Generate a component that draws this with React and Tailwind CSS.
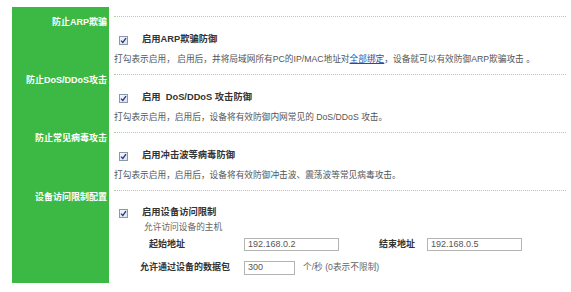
import React from 'react';

const sections = [
    {
        title: '防止ARP欺骗',
        check: '启用ARP欺骗防御',
        desc: (
            <>
                打勾表示启用， 启用后，并将局域网所有PC的IP/MAC地址对
                <span className="text-[#1d4fa6] underline">全部绑定</span>
                ，设备就可以有效防御ARP欺骗攻击 。
            </>
        ),
    },
    {
        title: '防止DoS/DDoS攻击',
        check: '启用\u00a0\u00a0DoS/DDoS 攻击防御',
        desc: '打勾表示启用，启用后，设备将有效防御内网常见的 DoS/DDoS 攻击。',
    },
    {
        title: '防止常见病毒攻击',
        check: '启用冲击波等病毒防御',
        desc: '打勾表示启用，启用后，设备将有效防御冲击波、震荡波等常见病毒攻击。',
    },
];

const CheckBox = () => (
    <span className="flex items-center justify-center w-[9px] h-[9px] border border-[#8b98a8] bg-gradient-to-br from-[#f4f6fb] to-[#dde3ee]">
        <svg width="7" height="7" viewBox="0 0 7 7">
            <path d="M1 3.6 L2.8 5.4 L6 1.2" fill="none" stroke="#24368a" strokeWidth="1.3" />
        </svg>
    </span>
);

const TextBox = ({ value, width, height }) => (
    <div
        className={`${width} ${height} border border-[#b4b4b4] bg-white flex items-center pl-[3px] text-[9px] text-[#555] font-['Liberation_Sans',sans-serif]`}
    >
        {value}
    </div>
);

const App = () => {
    return (
        <div className="w-[571px] h-[292px] bg-white font-['Liberation_Sans','Noto_Sans_CJK_SC',sans-serif] overflow-hidden">
            <div className="ml-[12px] pt-[7px] grid grid-cols-[97px_457px]">
                {/* spacer above first row */}
                <div className="h-[9px] bg-[#3cb944]" />
                <div />

                {sections.map((s) => (
                    <React.Fragment key={s.title}>
                        <div className="h-[58px] bg-[#3cb944] text-right pr-[2px] pt-[1px] text-white font-bold text-[9px] leading-[11px]">
                            {s.title}
                        </div>
                        <div className="ml-[5px] border-t border-dotted border-[#a3d594] pt-[16px]">
                            <div className="flex items-center h-[14px] pl-[5px]">
                                <CheckBox />
                                <span className="ml-[14px] text-[9.3px] font-bold text-[#333] whitespace-pre">{s.check}</span>
                            </div>
                            <div className="mt-[6px] text-[8.7px] leading-[12px] text-[#555] whitespace-nowrap">
                                {s.desc}
                            </div>
                        </div>
                    </React.Fragment>
                ))}

                <div className="h-[93px] bg-[#3cb944] text-right pr-[2px] pt-[1px] text-white font-bold text-[9px] leading-[12px]">
                    设备访问限制配置
                </div>
                <div className="ml-[5px] border-t border-dotted border-[#a3d594] pt-[15px]">
                    <div className="flex items-center h-[14px] pl-[5px]">
                        <CheckBox />
                        <span className="ml-[14px] text-[9.3px] font-bold text-[#333]">启用设备访问限制</span>
                    </div>
                    <div className="mt-[1px] pl-[30px] text-[8.7px] leading-[12px] text-[#666]">允许访问设备的主机</div>
                    <div className="mt-[5px] flex items-center h-[13px] pl-[35px]">
                        <span className="w-[95px] text-[9px] font-bold text-[#333]">起始地址</span>
                        <TextBox value="192.168.0.2" width="w-[95px]" height="h-[13px]" />
                        <span className="ml-[40px] w-[48px] text-[9px] font-bold text-[#333]">结束地址</span>
                        <TextBox value="192.168.0.5" width="w-[95px]" height="h-[13px]" />
                    </div>
                    <div className="mt-[10px] flex items-center h-[14px] pl-[26px]">
                        <span className="w-[104px] text-[9px] font-bold text-[#333]">允许通过设备的数据包</span>
                        <TextBox value="300" width="w-[51px]" height="h-[14px]" />
                        <span className="ml-[8px] text-[8.7px] text-[#666]">个/秒 (0表示不限制)</span>
                    </div>
                </div>
            </div>
        </div>
    );
};

export default App;
